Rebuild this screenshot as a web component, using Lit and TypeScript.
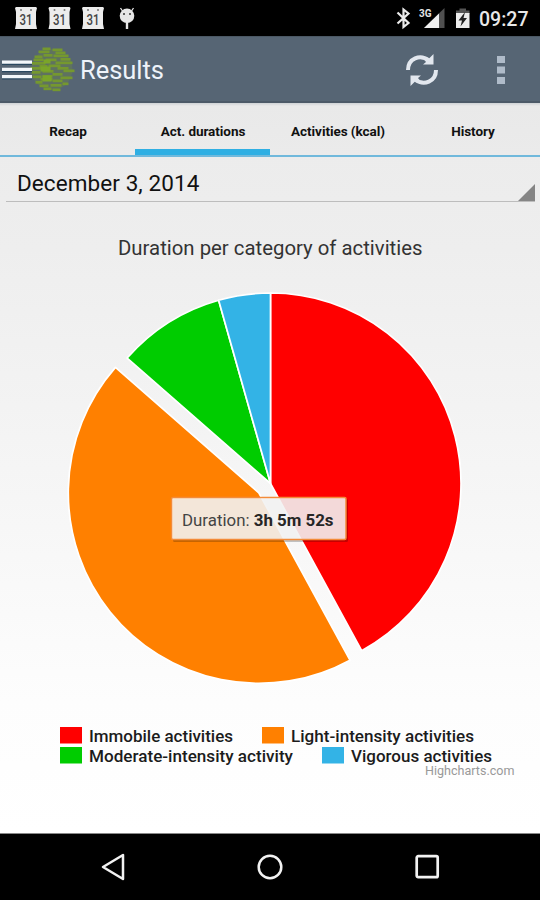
import { LitElement, html, svg, css } from "lit";
import { customElement, property, state } from "lit/decorators.js";
import { classMap } from "lit/directives/class-map.js";

@customElement("status-bar")
class StatusBar extends LitElement {
  static styles = css`
    :host { display: block; height: 36px; background: #000; }
    svg { display: block; }
    text { font-family: Roboto, sans-serif; }
    .day { font-size: 14px; font-weight: 500; fill: #444; }
    .net { font-size: 10.5px; font-weight: 700; fill: #e4e4e4; }
    .clock { font-size: 20px; font-weight: 500; fill: #e8e8e8; }
  `;

  calendar(x: number) {
    return svg`<g transform="translate(${x} 7)">
      <path d="M1 0H21L22 1L21 5V17L22 22H0L1 17V5L0 1Z" fill="#ececec"/>
      <circle cx="6" cy="3" r="1" fill="#777"/><circle cx="16" cy="3" r="1" fill="#777"/>
      <text class="day" x="4.500" y="18" textLength="13" lengthAdjust="spacingAndGlyphs">31</text>
    </g>`;
  }

  render() {
    return html`<svg width="540" height="36" viewBox="0 0 540 36">
      ${[15, 48.5, 82].map((x) => this.calendar(x))}
      <g fill="#e6e6e6" stroke="#e6e6e6">
        <path d="M122.500 11L120.500 8M131.500 11L133.500 8" stroke-width="1.300"/>
        <circle cx="127" cy="15.800" r="7.300" stroke="none"/>
        <path d="M127 21V29" stroke-width="2.400"/>
        <circle cx="124" cy="14" r="1" fill="#333" stroke="none"/>
        <circle cx="130" cy="14" r="1" fill="#333" stroke="none"/>
      </g>
      <path d="M397.500 12.500L408.500 23L403.500 27V9.500L408.500 13.500L397.500 23.500" fill="none" stroke="#ececec" stroke-width="2.200"/>
      <text class="net" x="419" y="17.300" textLength="12.500" lengthAdjust="spacingAndGlyphs">3G</text>
      <path d="M424 28L444.500 8V28Z" fill="#505050"/>
      <path d="M424 28L439 13.500V28Z" fill="#f0f0f0"/>
      <path d="M459.500 8.500H466V10.500H469.500V14H456V10.500H459.500Z" fill="#555"/>
      <path d="M456 13H469.500V28H456Z" fill="#ececec"/>
      <path d="M465 12L458.500 20.500H462L460.500 26.500L467 18H463.500Z" fill="#222"/>
      <text class="clock" x="479" y="26" textLength="49.500" lengthAdjust="spacingAndGlyphs">09:27</text>
    </svg>`;
  }
}

@customElement("action-bar")
class ActionBar extends LitElement {
  static styles = css`
    :host {
      display: flex; align-items: center; height: 67px; box-sizing: border-box; padding-top: 2px;
      background: #566574; border-top: 1px solid #4b5864; border-bottom: 2px solid #4c5967;
      color: #eef3fa; font-family: Roboto, sans-serif;
    }
    svg { display: block; flex: none; }
    .title { font-size: 25.5px; line-height: 30px; margin-left: 5px; flex: 1; letter-spacing: -0.05px; }
    .refresh { margin-right: 58px; }
    .more { margin-right: 35px; }
  `;

  render() {
    // Each row: [x, y, width] of a green band on the globe.
    const bands = [
      [12, 0, 8], [22, 1, 10], [8, 3, 11], [25, 4, 10], [13, 6.500, 9], [23, 7, 15], [4, 8, 8],
      [3, 11, 10], [15, 11, 11], [30, 10.500, 10], [1, 14.500, 14], [25, 14, 17], [9, 17.500, 8], [18, 17, 12],
      [0, 19.500, 12], [27, 19.500, 11], [12, 22.500, 11], [33, 22, 11], [1, 23.500, 9], [22, 25.500, 10],
      [2, 28, 9], [12, 27.500, 10], [30, 29, 12], [10, 30.500, 12], [22, 32, 10], [5, 33.500, 7], [32, 35, 6],
      [9, 37, 9], [20, 36.500, 11], [13, 40, 8], [22, 41, 8],
    ];
    return html`
      <svg width="75" height="46" viewBox="0 0 75 46">
        <g fill="#75982f" transform="translate(30.500 .5)">
          <circle cx="21.500" cy="22" r="20.500" opacity=".28"/>
          ${bands.map(([x, y, w]) => svg`<rect x=${x} y=${y} width=${w} height="2.700"/>`)}
          <path d="M13 12H20V16H13ZM10 19H20V24H10ZM12 28H21V34H12Z" fill="#7ba529"/>
        </g>
        <path d="M2 16H32M2 23.200H32M2 30.400H32" stroke="#29475f" stroke-width="4"/>
        <path d="M2 15.200H32M2 22.400H32M2 29.600H32" stroke="#f2f6fa" stroke-width="3.300"/>
      </svg>
      <span class="title">Results</span>
      <svg class="refresh" width="34" height="34" viewBox="0 0 34 34">
        <path d="M3 17C3 5.500 15 .5 24 7.500M31 17C31 28.500 19 33.500 10 26.500" fill="none" stroke="#e2e7ee" stroke-width="4"/>
        <path d="M28.500 1V11.500H18L21 9L18 5L24 5.500ZM5.500 33V22.500H16L13 25L16 29L10 28.500Z" fill="#e2e7ee"/>
      </svg>
      <svg class="more" width="8" height="30" viewBox="0 0 8 30">
        <path d="M0 1H8V8H0ZM0 11.500H8V18.500H0ZM0 22H8V29H0Z" fill="#afbbc9"/>
      </svg>
    `;
  }
}

@customElement("tab-strip")
class TabStrip extends LitElement {
  @property({ type: Number }) active = 1;
  static styles = css`
    :host {
      display: grid; grid-template-columns: repeat(4, 1fr); height: 54px; box-sizing: border-box;
      border-bottom: 2px solid #70b9dc; font-family: Roboto, sans-serif;
      background: linear-gradient(#cfd2d5, #e9e9e9 3px, #ebebeb);
    }
    .tab {
      display: flex; align-items: center; justify-content: center; box-sizing: border-box;
      padding: 9px 0 0 1px; border-bottom: 6px solid transparent;
      font-size: 13.5px; letter-spacing: -0.05px; font-weight: 700; color: #111; white-space: nowrap;
    }
    .on { border-color: #2fafe3; }
  `;
  render() {
    return ["Recap", "Act. durations", "Activities (kcal)", "History"].map(
      (t, i) => html`<div class=${classMap({ tab: true, on: i === this.active })} @click=${() => (this.active = i)}>${t}</div>`
    );
  }
}

interface Slice { label: string; color: string; from: number; to: number; sliced?: boolean; }

@customElement("duration-chart")
class DurationChart extends LitElement {
  @state() slices: Slice[] = [
    { label: "Immobile activities", color: "#ff0000", from: 0, to: 151.4 },
    { label: "Light-intensity activities", color: "#ff8000", from: 151.4, to: 311.2, sliced: true },
    { label: "Moderate-intensity activity", color: "#00cc00", from: 311.2, to: 344.2 },
    { label: "Vigorous activities", color: "#33b3e6", from: 344.2, to: 360 },
  ];

  static styles = css`
    :host { display: block; height: 630px; }
    svg { display: block; }
    text { font-family: Roboto, sans-serif; }
    .heading { font-size: 20.5px; fill: #333; }
    .legend { font-size: 16.5px; font-weight: 500; fill: #1c1c1c; }
    .credit { font-size: 12.5px; fill: #999; }
    .tip { font-size: 16.5px; fill: #444; }
    .value { font-weight: 700; fill: #262626; }
  `;

  arc(s: Slice) {
    const cx = 270.5, cy = 280.5, r = 190.5;
    const pt = (deg: number) => {
      const a = (deg * Math.PI) / 180;
      return `${cx + r * Math.sin(a)} ${cy - r * Math.cos(a)}`;
    };
    const mid = (((s.from + s.to) / 2) * Math.PI) / 180;
    const off = s.sliced ? 15 : 0;
    return svg`<path d="M${cx} ${cy}L${pt(s.from)}A${r} ${r} 0 0 1 ${pt(s.to)}Z" fill=${s.color}
      stroke="#fff" stroke-width="1.700" stroke-linejoin="round"
      transform="translate(${off * Math.sin(mid)} ${-off * Math.cos(mid)})"/>`;
  }

  render() {
    const places = [[60, 524, 144], [262, 524, 183], [60, 544, 204], [322, 544, 141]];
    return html`<svg width="540" height="630" viewBox="0 0 540 630">
      <text class="heading" x="118" y="51.500" textLength="304.500" lengthAdjust="spacingAndGlyphs">Duration per category of activities</text>
      ${this.slices.map((s) => this.arc(s))}
      <rect x="173" y="296" width="175" height="43" rx="1.500" fill="#000" opacity=".22"/>
      <rect x="171.500" y="294.500" width="174.500" height="42" rx="1.500" fill="#f9f9f9" fill-opacity=".87" stroke="#f38b3a" stroke-width="1.500"/>
      <text class="tip" x="182" y="322.500" textLength="151.500" lengthAdjust="spacingAndGlyphs">Duration: <tspan class="value">3h 5m 52s</tspan></text>
      ${this.slices.map((s, i) => {
        const [x, y, w] = places[i];
        return svg`<rect x=${x} y=${y} width="22" height="16.500" fill=${s.color}/>
          <text class="legend" x=${x + 29} y=${y + 15} textLength=${w} lengthAdjust="spacingAndGlyphs">${s.label}</text>`;
      })}
      <text class="credit" x="425" y="571.500" textLength="89.500" lengthAdjust="spacingAndGlyphs">Highcharts.com</text>
    </svg>`;
  }
}

@customElement("app-root")
class AppRoot extends LitElement {
  static styles = css`
    :host { display: flex; flex-direction: column; width: 540px; height: 900px; overflow: hidden; font-family: Roboto, sans-serif; background: #000; }
    .content { height: 731px; box-sizing: border-box; border-bottom: 1px solid #888; background: linear-gradient(#ebebeb, #eeeeee 20%, #f5f5f5 50%, #fdfdfd 82%, #fff); }
    .picker {
      display: flex; align-items: center; justify-content: space-between; height: 45px; box-sizing: border-box;
      margin: 0 5px 1px 6px; padding: 7px 0 0 11px; border-bottom: 1px solid #bdbdbd; color: #111; font-size: 22.5px; letter-spacing: 0.08px;
    }
    .caret { align-self: flex-end; display: block; }
    .nav { display: flex; justify-content: space-between; align-items: center; height: 66px; padding: 0 100px 0 99px; }
    .nav svg { display: block; }
  `;

  render() {
    return html`
      <status-bar></status-bar>
      <action-bar></action-bar>
      <div class="content">
        <tab-strip></tab-strip>
        <div class="picker">
          <span>December 3, 2014</span>
          <svg class="caret" width="17" height="17" viewBox="0 0 17 17"><path d="M17 0V17H0Z" fill="#858585"/></svg>
        </div>
        <duration-chart></duration-chart>
      </div>
      <div class="nav">
        <svg width="26" height="30" viewBox="0 0 26 30"><path d="M24 3V27L4 15Z" fill="none" stroke="#f2f2f2" stroke-width="2.500" stroke-linejoin="round"/></svg>
        <svg width="28" height="28" viewBox="0 0 28 28"><circle cx="14" cy="14" r="11.300" fill="none" stroke="#f2f2f2" stroke-width="2.500"/></svg>
        <svg width="26" height="28" viewBox="0 0 26 28"><rect x="2.700" y="3.200" width="21" height="21" rx="1.500" fill="none" stroke="#f2f2f2" stroke-width="2.700"/></svg>
      </div>
    `;
  }
}
